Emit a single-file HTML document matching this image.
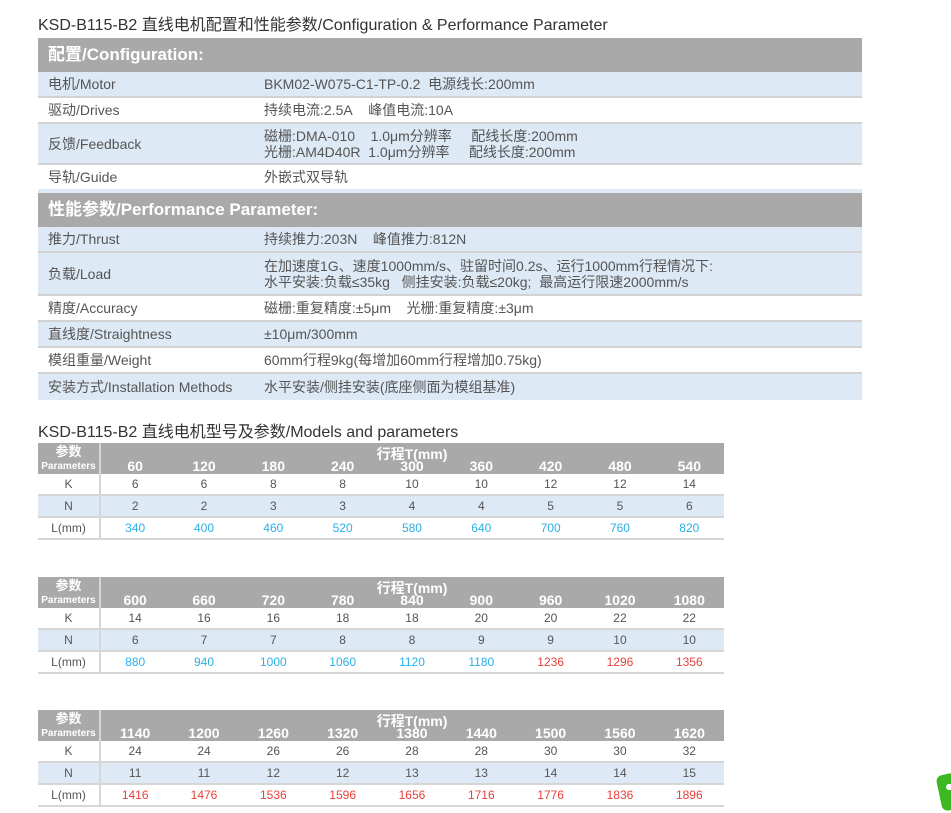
<!DOCTYPE html>
<html><head><meta charset="utf-8"><style>
body{margin:0;background:#fff;font-family:"Liberation Sans","Noto Sans CJK SC",sans-serif;color:#444;}
.t{position:absolute;left:38px;font-size:16px;color:#333;}
.cfg{position:absolute;left:38px;width:824px;border-collapse:collapse;table-layout:fixed;font-size:14px;color:#555;}
.cfg td{padding:0 0 0 10px;border-bottom:2px solid #d2d2d2;line-height:16px;}
.cfg tr.b td{background:#dde9f5;}
.cfg tr.h td{background:#a9a9a9;color:#fff;font-weight:bold;font-size:17px;border-bottom:none;}
.m{position:absolute;left:38px;width:686px;border-collapse:collapse;table-layout:fixed;font-size:12px;color:#555;text-align:center;}
.m td{padding:0;height:20px;border-bottom:2px solid #d6d6d6;}
.m tr.b td{background:#dde9f5;}
.m td.p{border-right:2px solid #d6d6d6;}
.m tr.h td{background:#a9a9a9;color:#fff;font-weight:bold;font-size:14px;vertical-align:bottom;border-bottom:none;height:31px;line-height:16px;}
.m tr.h td.p{font-size:13px;line-height:13px;vertical-align:middle;}
.m tr.h td.p span{font-size:10px;}
.bl{color:#2ab0e8}.rd{color:#e8413c}
.gt{position:absolute;left:100px;width:624px;text-align:center;font-size:14px;font-weight:bold;color:#fff;}
</style></head><body>
<div class="t" style="top:11px">KSD-B115-B2 直线电机配置和性能参数/Configuration &amp; Performance Parameter</div>
<table class="cfg" style="top:38px">
<col style="width:216px"><col>
<tr class="h"><td style="height:34px">配置/Configuration:</td><td></td></tr>
<tr class="b"><td style="height:24px">电机/Motor</td><td>BKM02-W075-C1-TP-0.2&nbsp; 电源线长:200mm</td></tr>
<tr><td style="height:24px">驱动/Drives</td><td>持续电流:2.5A&nbsp;&nbsp;&nbsp; 峰值电流:10A</td></tr>
<tr class="b"><td style="height:39px">反馈/Feedback</td><td>磁栅:DMA-010&nbsp;&nbsp;&nbsp; 1.0μm分辨率&nbsp;&nbsp;&nbsp;&nbsp; 配线长度:200mm<br>光栅:AM4D40R&nbsp; 1.0μm分辨率&nbsp;&nbsp;&nbsp;&nbsp; 配线长度:200mm</td></tr>
<tr><td style="height:24px;border-bottom:4px solid #dde9f5">导轨/Guide</td><td style="border-bottom:4px solid #dde9f5">外嵌式双导轨</td></tr>
<tr class="h"><td style="height:34px;white-space:nowrap">性能参数/Performance Parameter:</td><td></td></tr>
<tr class="b"><td style="height:24px">推力/Thrust</td><td>持续推力:203N&nbsp;&nbsp;&nbsp; 峰值推力:812N</td></tr>
<tr class="b"><td style="height:41px">负载/Load</td><td>在加速度1G、速度1000mm/s、驻留时间0.2s、运行1000mm行程情况下:<br>水平安装:负载≤35kg&nbsp;&nbsp; 侧挂安装:负载≤20kg;&nbsp; 最高运行限速2000mm/s</td></tr>
<tr><td style="height:24px">精度/Accuracy</td><td>磁栅:重复精度:±5μm&nbsp;&nbsp;&nbsp; 光栅:重复精度:±3μm</td></tr>
<tr class="b"><td style="height:24px">直线度/Straightness</td><td>±10μm/300mm</td></tr>
<tr><td style="height:24px">模组重量/Weight</td><td>60mm行程9kg(每增加60mm行程增加0.75kg)</td></tr>
<tr class="b"><td style="height:26px;border-bottom:none;white-space:nowrap">安装方式/Installation Methods</td><td style="border-bottom:none">水平安装/侧挂安装(底座侧面为模组基准)</td></tr>
</table>
<div class="t" style="top:418px">KSD-B115-B2 直线电机型号及参数/Models and parameters</div>

<table class="m" style="top:443px">
<col style="width:62px"><col span="9">
<tr class="h"><td class="p">参数<br><span>Parameters</span></td><td>60</td><td>120</td><td>180</td><td>240</td><td>300</td><td>360</td><td>420</td><td>480</td><td>540</td></tr>
<tr><td class="p">K</td><td>6</td><td>6</td><td>8</td><td>8</td><td>10</td><td>10</td><td>12</td><td>12</td><td>14</td></tr>
<tr class="b"><td class="p">N</td><td>2</td><td>2</td><td>3</td><td>3</td><td>4</td><td>4</td><td>5</td><td>5</td><td>6</td></tr>
<tr class="bl"><td class="p" style="color:#555">L(mm)</td><td>340</td><td>400</td><td>460</td><td>520</td><td>580</td><td>640</td><td>700</td><td>760</td><td>820</td></tr>
</table>
<div class="gt" style="top:444px">行程T(mm)</div>

<table class="m" style="top:577px">
<col style="width:62px"><col span="9">
<tr class="h"><td class="p">参数<br><span>Parameters</span></td><td>600</td><td>660</td><td>720</td><td>780</td><td>840</td><td>900</td><td>960</td><td>1020</td><td>1080</td></tr>
<tr><td class="p">K</td><td>14</td><td>16</td><td>16</td><td>18</td><td>18</td><td>20</td><td>20</td><td>22</td><td>22</td></tr>
<tr class="b"><td class="p">N</td><td>6</td><td>7</td><td>7</td><td>8</td><td>8</td><td>9</td><td>9</td><td>10</td><td>10</td></tr>
<tr><td class="p">L(mm)</td><td class="bl">880</td><td class="bl">940</td><td class="bl">1000</td><td class="bl">1060</td><td class="bl">1120</td><td class="bl">1180</td><td class="rd">1236</td><td class="rd">1296</td><td class="rd">1356</td></tr>
</table>
<div class="gt" style="top:578px">行程T(mm)</div>

<table class="m" style="top:710px">
<col style="width:62px"><col span="9">
<tr class="h"><td class="p">参数<br><span>Parameters</span></td><td>1140</td><td>1200</td><td>1260</td><td>1320</td><td>1380</td><td>1440</td><td>1500</td><td>1560</td><td>1620</td></tr>
<tr><td class="p">K</td><td>24</td><td>24</td><td>26</td><td>26</td><td>28</td><td>28</td><td>30</td><td>30</td><td>32</td></tr>
<tr class="b"><td class="p">N</td><td>11</td><td>11</td><td>12</td><td>12</td><td>13</td><td>13</td><td>14</td><td>14</td><td>15</td></tr>
<tr class="rd"><td class="p" style="color:#555">L(mm)</td><td>1416</td><td>1476</td><td>1536</td><td>1596</td><td>1656</td><td>1716</td><td>1776</td><td>1836</td><td>1896</td></tr>
</table>
<div class="gt" style="top:711px">行程T(mm)</div>

<div style="position:absolute;left:939px;top:774px;width:20px;height:36px;background:#3cb820;border-radius:6px;transform:rotate(-12deg)"></div>
<div style="position:absolute;left:946px;top:784px;width:8px;height:6px;background:#fff;border-radius:3px"></div>
</body></html>
